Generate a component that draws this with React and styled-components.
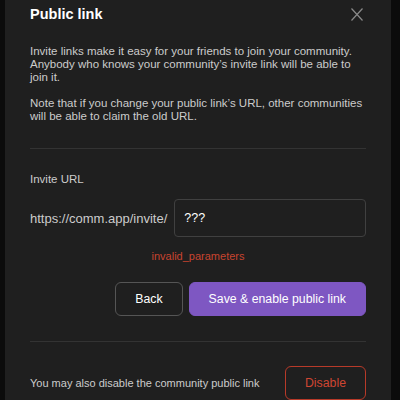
import React from 'react';
import styled, { createGlobalStyle } from 'styled-components';

const GlobalStyle = createGlobalStyle`
  html, body {
    margin: 0;
    padding: 0;
    background: #0b0b0b;
    font-family: "Liberation Sans", Arial, sans-serif;
  }
`;

const Page = styled.div`
  width: 400px;
  height: 400px;
  overflow: hidden;
`;

const Modal = styled.div`
  margin-left: 5px;
  width: 386px;
  height: 400px;
  box-sizing: border-box;
  padding: 5px 25px 0;
  background: #1f1f1f;
  color: #cccccc;
`;

const Header = styled.div`
  display: flex;
  align-items: center;
  justify-content: space-between;
  height: 18px;
`;

const Title = styled.h1`
  margin: 0;
  font-size: 14.5px;
  line-height: 18px;
  font-weight: 700;
  color: #ffffff;
`;

const CloseButton = styled.button`
  display: flex;
  padding: 0;
  margin-right: 3px;
  border: none;
  background: none;
  cursor: pointer;
`;

const Paragraph = styled.p`
  margin: ${(p) => (p.first ? '22px' : '13px')} 0 0;
  font-size: 11.5px;
  line-height: 13px;
  color: #cccccc;
`;

const Divider = styled.hr`
  margin: 25px 0 0;
  border: none;
  height: 1px;
  background: #333333;
`;

const Label = styled.div`
  margin-top: 24px;
  font-size: 11.5px;
  line-height: 13px;
  color: #cccccc;
`;

const UrlRow = styled.div`
  display: flex;
  align-items: center;
  gap: 7px;
  margin-top: 13px;
`;

const Prefix = styled.span`
  font-size: 13px;
  color: #cccccc;
  white-space: nowrap;
`;

const Input = styled.input`
  flex: 1;
  min-width: 0;
  height: 38px;
  box-sizing: border-box;
  padding: 0 9px;
  border: 1px solid #404040;
  border-radius: 4px;
  background: transparent;
  color: #ffffff;
  font-family: inherit;
  font-size: 12.5px;
  outline: none;
`;

const Error = styled.div`
  margin-top: 13px;
  text-align: center;
  font-size: 11px;
  line-height: 13px;
  color: #c8442f;
`;

const Actions = styled.div`
  display: flex;
  justify-content: flex-end;
  gap: 6px;
  margin-top: 19px;
`;

const Button = styled.button`
  height: 34px;
  box-sizing: border-box;
  padding: 0 19px;
  border-radius: 6px;
  font-family: inherit;
  font-size: 12.3px;
  cursor: pointer;
  border: 1px solid
    ${(p) =>
      p.variant === 'primary' ? '#7e57c2' : p.variant === 'danger' ? '#b83a29' : '#555555'};
  background: ${(p) => (p.variant === 'primary' ? '#7e57c2' : 'transparent')};
  color: ${(p) => (p.variant === 'danger' ? '#cf4632' : '#ffffff')};
`;

const Footer = styled.div`
  display: flex;
  align-items: center;
  justify-content: space-between;
  margin-top: 24px;
`;

const FooterText = styled.span`
  font-size: 11px;
  color: #cccccc;
`;

function CloseIcon() {
  return (
    <svg width="12" height="13" viewBox="0 0 12 13">
      <path d="M0.5 0.5 L11.5 12.5 M11.5 0.5 L0.5 12.5" stroke="#8a8a8a" strokeWidth="1.2" fill="none" />
    </svg>
  );
}

export default function App() {
  return (
    <Page>
      <GlobalStyle />
      <Modal>
        <Header>
          <Title>Public link</Title>
          <CloseButton aria-label="Close">
            <CloseIcon />
          </CloseButton>
        </Header>
        <Paragraph first>
          Invite links make it easy for your friends to join your community. Anybody who knows
          your community’s invite link will be able to join it.
        </Paragraph>
        <Paragraph>
          Note that if you change your public link’s URL, other communities will be able to claim
          the old URL.
        </Paragraph>
        <Divider />
        <Label>Invite URL</Label>
        <UrlRow>
          <Prefix>https://comm.app/invite/</Prefix>
          <Input defaultValue="???" />
        </UrlRow>
        <Error>invalid_parameters</Error>
        <Actions>
          <Button>Back</Button>
          <Button variant="primary">Save &amp; enable public link</Button>
        </Actions>
        <Divider />
        <Footer>
          <FooterText>You may also disable the community public link</FooterText>
          <Button variant="danger">Disable</Button>
        </Footer>
      </Modal>
    </Page>
  );
}
